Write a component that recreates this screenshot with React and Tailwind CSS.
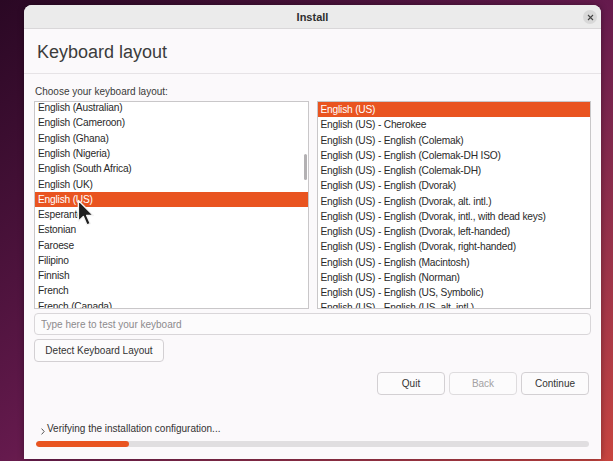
import React, { useState } from "react";

const layouts = [
  "English (Australian)",
  "English (Cameroon)",
  "English (Ghana)",
  "English (Nigeria)",
  "English (South Africa)",
  "English (UK)",
  "English (US)",
  "Esperanto",
  "Estonian",
  "Faroese",
  "Filipino",
  "Finnish",
  "French",
  "French (Canada)",
];

const variants = [
  "English (US)",
  "English (US) - Cherokee",
  "English (US) - English (Colemak)",
  "English (US) - English (Colemak-DH ISO)",
  "English (US) - English (Colemak-DH)",
  "English (US) - English (Dvorak)",
  "English (US) - English (Dvorak, alt. intl.)",
  "English (US) - English (Dvorak, intl., with dead keys)",
  "English (US) - English (Dvorak, left-handed)",
  "English (US) - English (Dvorak, right-handed)",
  "English (US) - English (Macintosh)",
  "English (US) - English (Norman)",
  "English (US) - English (US, Symbolic)",
  "English (US) - English (US, alt. intl.)",
];

function Row({ label, selected, onClick }) {
  return (
    <div
      onClick={onClick}
      className={`h-[15.27px] shrink-0 pl-[3px] leading-[15.27px] whitespace-nowrap text-[10.2px] tracking-[-0.2px] ${
        selected ? "bg-[#e95420] text-white" : "text-[#2a2a2a]"
      }`}
    >
      {label}
    </div>
  );
}

function Pointer() {
  return (
    <svg
      className="absolute left-[77px] top-[199px] pointer-events-none"
      width="18"
      height="28"
      viewBox="0 0 13 20"
    >
      <path
        d="M1 1 L1 16 L4.6 12.6 L7.2 18.6 L9.6 17.6 L7 11.8 L11.8 11.8 Z"
        fill="#1e1e1e"
        stroke="#f4f4f4"
        strokeWidth="1"
        strokeLinejoin="round"
      />
    </svg>
  );
}

export default function App() {
  const [layout, setLayout] = useState("English (US)");
  const [variant, setVariant] = useState("English (US)");

  return (
    <div className="relative w-[613px] h-[461px] overflow-hidden bg-linear-to-br from-[#2a0824] via-[#651a4d] to-[#c8453f] pl-[24px] pr-[12px] pt-[5px] font-['Liberation_Sans',Arial,sans-serif]">
      {/* window */}
      <div className="flex h-[454px] flex-col rounded-t-[8px] bg-[#fbf9fb] overflow-hidden shadow-[0_0_6px_rgba(0,0,0,0.35)]">
        {/* title bar */}
        <div className="relative flex h-[24px] shrink-0 items-center justify-center border-b border-[#d9d7d9] bg-[#ebebeb]">
          <span className="pt-[1px] text-[11px] font-bold text-[#2e2e2e]">Install</span>
          <div className="absolute right-[4px] top-[5px] flex h-[14px] w-[14px] items-center justify-center rounded-full bg-[#d8d8d8]">
            <svg width="7" height="7" viewBox="0 0 7 7">
              <path d="M1 1 L6 6 M6 1 L1 6" stroke="#444" strokeWidth="1.1" />
            </svg>
          </div>
        </div>

        {/* header */}
        <div className="flex h-[45px] shrink-0 items-center border-b border-[#e6e3e6] pl-[13px] pt-[3px]">
          <h1 className="text-[18px] font-normal text-[#3c3c3c]">Keyboard layout</h1>
        </div>

        {/* body */}
        <div className="flex flex-1 flex-col pl-[10px] pr-[10px] pt-[11px]">
          <div className="mb-[3px] h-[13px] pl-[1px] text-[10px] leading-[13px] text-[#3a3a3a]">
            Choose your keyboard layout:
          </div>

          <div className="grid h-[208px] grid-cols-2 gap-[8px]">
            <div className="relative flex flex-col overflow-hidden border border-[#c9c7c9] bg-white">
              <div className="-mt-[1.8px] flex flex-col">
                {layouts.map((l) => (
                  <Row key={l} label={l} selected={l === layout} onClick={() => setLayout(l)} />
                ))}
              </div>
              <div className="absolute right-[1px] top-[52px] h-[26px] w-[3px] rounded-full bg-[#b3b1b3]" />
            </div>
            <div className="flex flex-col overflow-hidden border border-[#c9c7c9] bg-white">
              {variants.map((v) => (
                <Row key={v} label={v} selected={v === variant} onClick={() => setVariant(v)} />
              ))}
            </div>
          </div>

          <input
            className="mt-[4px] h-[22px] rounded-[4px] border border-[#d9d6d9] bg-[#fcfbfc] px-[6px] text-[10px] text-[#333] outline-none placeholder:text-[#8c8a8c]"
            placeholder="Type here to test your keyboard"
          />

          <div className="mt-[4px] flex">
            <button className="h-[23px] w-[130px] rounded-[4px] border border-[#d3d0d3] bg-[#fcfbfc] text-[10px] text-[#333]">
              Detect Keyboard Layout
            </button>
          </div>

          <div className="mt-[10px] mr-[2px] flex justify-end gap-[4px]">
            <button className="h-[23px] w-[68px] rounded-[4px] border border-[#d3d0d3] bg-[#fcfbfc] text-[10px] text-[#333]">
              Quit
            </button>
            <button className="h-[23px] w-[68px] rounded-[4px] border border-[#dedcde] bg-[#fcfbfc] text-[10px] text-[#a3a1a3]">
              Back
            </button>
            <button className="h-[23px] w-[68px] rounded-[4px] border border-[#d3d0d3] bg-[#fcfbfc] text-[10px] text-[#333]">
              Continue
            </button>
          </div>

          <div className="mt-[26px] flex h-[14px] items-center pl-[7px] text-[10px] text-[#333]">
            <svg className="mt-[6px] mr-[2px]" width="4" height="7" viewBox="0 0 4 7">
              <path d="M0.6 0.6 L3.2 3.5 L0.6 6.4" fill="none" stroke="#444" strokeWidth="0.9" />
            </svg>
            <span>Verifying the installation configuration...</span>
          </div>

          <div className="mx-[2px] mt-[6px] h-[6px] overflow-hidden rounded-full bg-[#e0dee0]">
            <div className="h-full w-[93px] rounded-full bg-[#e95420]" />
          </div>
        </div>
      </div>
      <Pointer />
    </div>
  );
}
